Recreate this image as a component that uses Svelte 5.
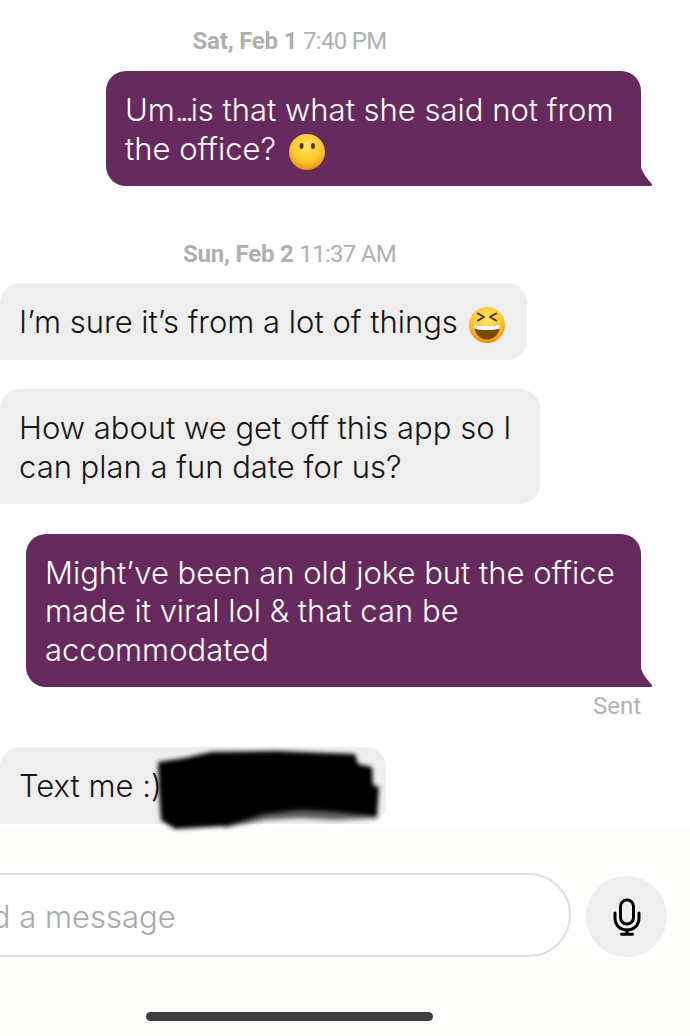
<script>
  const tail = "M0 0C1 9 5 14 11 21C13 23 12 24 10 24L0 24Z";
</script>

<div class="page">
  <div class="messages">
    <p class="date first"><b>Sat, Feb 1</b> <span>7:40 PM</span></p>
    <div class="bubble out w-a">
      Um<span class="dots">...</span>is that what she said not from<br />the office?
      <svg class="emoji" viewBox="0 0 36 36" aria-hidden="true">
        <defs>
          <radialGradient id="f1" cx="50%" cy="35%" r="65%">
            <stop offset="0" stop-color="#ffe45c" />
            <stop offset="0.65" stop-color="#fdc62e" />
            <stop offset="1" stop-color="#ee8c0a" />
          </radialGradient>
        </defs>
        <circle cx="18" cy="18" r="18" fill="url(#f1)" />
        <ellipse cx="12.5" cy="12" rx="2" ry="3" fill="#5c3300" />
        <ellipse cx="24" cy="12" rx="2" ry="3" fill="#5c3300" />
      </svg>
      <svg class="tail" viewBox="0 0 13 24" aria-hidden="true"><path d={tail} /></svg>
    </div>

    <p class="date second"><b>Sun, Feb 2</b> <span>11:37 AM</span></p>
    <div class="bubble in w-b">
      I’m sure it’s from a lot of things
      <svg class="emoji tight" viewBox="0 0 36 36" aria-hidden="true">
        <defs>
          <radialGradient id="f2" cx="50%" cy="35%" r="65%">
            <stop offset="0" stop-color="#ffe45c" />
            <stop offset="0.65" stop-color="#fdc62e" />
            <stop offset="1" stop-color="#ee8c0a" />
          </radialGradient>
        </defs>
        <circle cx="18" cy="18" r="18" fill="url(#f2)" />
        <path d="M9 6.5l6 3.5-6 3.5M27 6.5l-6 3.5 6 3.5" fill="none" stroke="#4a2c08" stroke-width="2" stroke-linecap="round" stroke-linejoin="round" />
        <path d="M5 17.5C11 19.5 25 19.5 31 17.5C31 27 25 32.5 18 32.5C11 32.5 5 27 5 17.5Z" fill="#7a4a10" />
        <path d="M5 17.5C11 19.5 25 19.5 31 17.5L30.5 21.5C24 23.5 12 23.5 5.500 21.5Z" fill="#fff" />
      </svg>
    </div>
    <div class="bubble in w-c gap">
      How about we get off this app so I<br />can plan a fun date for us?
    </div>
    <div class="bubble out w-d gap">
      Might’ve been an old joke but the office<br />made it viral lol &amp; that can be<br />accommodated
      <svg class="tail" viewBox="0 0 13 24" aria-hidden="true"><path d={tail} /></svg>
    </div>
    <p class="sent">Sent</p>
    <div class="bubble in w-e">
      Text me :)
      <svg class="redact" viewBox="0 0 226 82" aria-hidden="true">
        <path class="smear" d="M60 70L110 60L146 56L222 62L222 68L180 70L146 68L110 70L70 78Z" />
        <path d="M3 12L30 8L56 2L120 1L200 4L203 14L217 17L218 35L224 37L222 66L180 62L146 60L110 64L70 76L20 79L6 70L4 40Z" />
      </svg>
    </div>
  </div>

  <div class="dock">
    <div class="composer">
      <div class="field">Send a message</div>
      <button class="mic" aria-label="Record voice message">
        <svg viewBox="0 0 28 38" aria-hidden="true">
          <rect x="7.5" y="2" width="13" height="24" rx="6.5" fill="none" stroke="#000" stroke-width="3" />
          <path d="M2 15V20C2 27 7 32 14 32C21 32 26 27 26 20V15" fill="none" stroke="#000" stroke-width="3" stroke-linecap="round" />
          <path d="M14 32V36M8.5 36.3H19.5" fill="none" stroke="#000" stroke-width="3" stroke-linecap="round" />
        </svg>
      </button>
    </div>
    <div class="home"></div>
  </div>
</div>

<style>
  :global(body) {
    margin: 0;
    background: #fff;
  }

  .page {
    width: 690px;
    height: 1036px;
    overflow: hidden;
    display: flex;
    flex-direction: column;
    font-family: "Inter", "Liberation Sans", sans-serif;
  }

  .messages {
    flex: 1;
    display: flex;
    flex-direction: column;
    padding: 27px 49px 0 0;
  }

  .date {
    margin: 0 0 16px;
    padding-right: 62px;
    font-family: "Roboto", "Liberation Sans", sans-serif;
    font-size: 24px;
    line-height: 28px;
    color: #b0b0b0;
    text-align: center;
    letter-spacing: -0.2px;
  }

  .date b {
    font-weight: 700;
  }

  .date span {
    letter-spacing: -0.7px;
  }

  .date.second {
    margin-top: 54px;
    margin-bottom: 15px;
  }

  .bubble {
    position: relative;
    box-sizing: border-box;
    padding: 20px 19px 18px;
    font-size: 31px;
    line-height: 38.5px;
    font-weight: 300;
    white-space: nowrap;
  }

  .dots {
    letter-spacing: -3.5px;
  }

  .bubble.out {
    align-self: flex-end;
    background: #672a5e;
    color: #fff;
    border-radius: 20px 20px 0 20px;
  }

  .bubble.in {
    align-self: flex-start;
    background: #eeeeee;
    color: #161616;
    border-radius: 20px 20px 20px 0;
  }

  .gap {
    margin-top: 29.5px;
  }

  .w-a { width: 535px; }
  .w-b { width: 527px; }
  .w-c { width: 540px; }
  .w-d { width: 615px; }
  .w-e { width: 386px; }

  .emoji {
    position: relative;
    width: 36px;
    height: 36px;
    margin: -8px 0 -8px 4px;
    vertical-align: -2px;
  }

  .emoji.tight {
    margin-left: 2px;
  }

  .tail {
    position: absolute;
    right: -12px;
    bottom: 0;
    width: 13px;
    height: 24px;
    fill: #672a5e;
  }

  .sent {
    margin: 7px 0 29px;
    text-align: right;
    font-family: "Roboto", "Liberation Sans", sans-serif;
    font-size: 24px;
    line-height: 24px;
    color: #b2b2b2;
  }

  .redact {
    position: absolute;
    left: 155px;
    top: 3px;
    width: 226px;
    height: 82px;
    fill: #000;
    filter: blur(2px);
  }

  .smear {
    opacity: 0.6;
  }

  .dock {
    height: 208px;
    margin-top: 4px;
    background: #fdfdfb;
    display: flex;
    flex-direction: column;
  }

  .composer {
    display: flex;
    align-items: flex-end;
    gap: 15px;
    margin: 45px 23px 0 -100px;
  }

  .field {
    flex: 1;
    box-sizing: border-box;
    height: 84px;
    padding-left: 34px;
    border: 2px solid #dedede;
    border-radius: 42px;
    background: #fefefe;
    font-size: 31px;
    font-weight: 300;
    line-height: 84px;
    color: #a9a9a9;
  }

  .mic {
    width: 81px;
    height: 81px;
    padding: 0;
    border: 0;
    border-radius: 50%;
    background: #eeeeee;
    display: flex;
    align-items: center;
    justify-content: center;
  }

  .mic svg {
    width: 28px;
    height: 38px;
  }

  .home {
    width: 287px;
    height: 9px;
    margin: 55px 0 0 146px;
    border-radius: 5px;
    background: #3f3f3f;
  }
</style>
